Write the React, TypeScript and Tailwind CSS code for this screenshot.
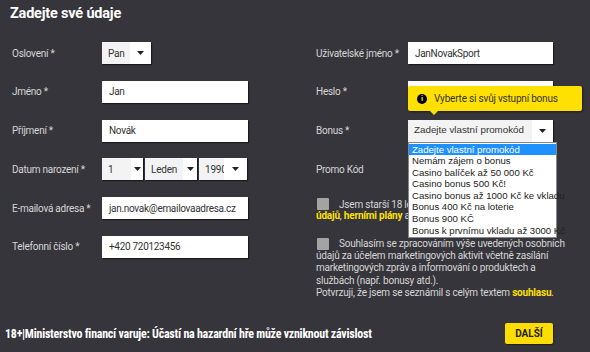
import React from "react";

const bonusOptions = [
  "Zadejte vlastní promokód",
  "Nemám zájem o bonus",
  "Casino balíček až 50 000 Kč",
  "Casino bonus 500 Kč!",
  "Casino bonus až 1000 Kč ke vkladu",
  "Bonus 400 Kč na loterie",
  "Bonus 900 KČ",
  "Bonus k prvnímu vkladu až 3000 Kč",
];

function Caret() {
  return (
    <svg width="7" height="4" viewBox="0 0 7 4" className="shrink-0">
      <path d="M0 0h7L3.5 4z" fill="#222" />
    </svg>
  );
}

function Field({ value, w = "w-[146px]" }: { value: string; w?: string }) {
  return (
    <div
      className={`${w} h-[22px] bg-white flex items-center pl-[7px] text-[10px] tracking-[-0.3px] text-[#333] whitespace-nowrap overflow-hidden shadow-[1px_1px_1px_rgba(0,0,0,0.5)]`}
    >
      {value}
    </div>
  );
}

function Select({
  value,
  w,
  textW,
  bonus,
}: {
  value: string;
  w: string;
  textW: string;
  bonus?: boolean;
}) {
  return (
    <div
      className={`${w} h-[22px] bg-white flex items-center text-[#333] shadow-[1px_1px_1px_rgba(0,0,0,0.5)]`}
    >
      <div
        className={`${textW} h-full bg-[#f3f3f3] flex items-center pl-[6px] overflow-hidden whitespace-nowrap ${
          bonus ? "text-[9.8px]" : "text-[10px] tracking-[-0.2px]"
        }`}
        style={bonus ? { fontFamily: "'Liberation Sans', Arial, sans-serif" } : undefined}
      >
        {value}
      </div>
      <div className="flex-1 flex items-center justify-center">
        <Caret />
      </div>
    </div>
  );
}

function Row({
  label,
  lw = "w-[90px]",
  children,
}: {
  label: string;
  lw?: string;
  children: React.ReactNode;
}) {
  return (
    <div className="flex items-center h-[22px]">
      <div className={`${lw} shrink-0 whitespace-nowrap text-[10px] tracking-[-0.25px] text-[#d6d6d6]`}>
        {label}
      </div>
      {children}
    </div>
  );
}

function Checkbox() {
  return <div className="w-[12px] h-[12px] bg-[#a3a3a3] shrink-0 rounded-[1px]" />;
}

export default function App() {
  return (
    <div
      className="relative w-[590px] h-[352px] overflow-hidden bg-[#36353b] text-white"
      style={{ fontFamily: "Roboto, 'Liberation Sans', sans-serif" }}
    >
      <h1 className="pl-[10px] pt-[5px] text-[14.5px] font-bold leading-[18px] tracking-[-0.2px]">
        Zadejte své údaje
      </h1>

      <div className="flex mt-[19px]">
        {/* left column */}
        <div className="w-[304px] pl-[12px] flex flex-col gap-[16.8px]">
          <Row label="Oslovení *">
            <Select value="Pan" w="w-[49px]" textW="w-[28px]" />
          </Row>
          <Row label="Jméno *">
            <Field value="Jan" />
          </Row>
          <Row label="Příjmení *">
            <Field value="Novák" />
          </Row>
          <Row label="Datum narození *">
            <div className="flex gap-[2px]">
              <Select value="1" w="w-[41px]" textW="w-[29px]" />
              <Select value="Leden" w="w-[52px]" textW="w-[38px]" />
              <Select value="1990" w="w-[48px]" textW="w-[25px]" />
            </div>
          </Row>
          <Row label="E-mailová adresa *">
            <Field value="jan.novak@emailovaadresa.cz" />
          </Row>
          <Row label="Telefonní číslo *">
            <Field value="+420  720123456" />
          </Row>
        </div>

        {/* right column */}
        <div className="flex-1 pl-[12px]">
          <div className="flex flex-col gap-[16.8px]">
            <Row label="Uživatelské jméno *" lw="w-[92px]">
              <Field value="JanNovakSport" w="w-[145px]" />
            </Row>
            <Row label="Heslo *" lw="w-[92px]">
              <Field value="" w="w-[145px]" />
            </Row>
            <Row label="Bonus *" lw="w-[92px]">
              <Select value="Zadejte vlastní promokód" w="w-[145px]" textW="w-[124px]" bonus />
            </Row>
            <Row label="Promo Kód" lw="w-[92px]">
              <Field value="" w="w-[145px]" />
            </Row>
          </div>

          <div className="mt-[18px] w-[262px] text-[10px] leading-[11.5px] tracking-[-0.2px] text-[#d6d6d6] whitespace-nowrap overflow-hidden">
            <div className="flex items-center">
              <div className="pl-[1px]">
                <Checkbox />
              </div>
              <div className="ml-[10px]">Jsem starší 18 let a souhlasím s obchodními</div>
            </div>
            <div>
              <span className="text-[#ffe100] font-bold">údajů</span>,{" "}
              <span className="text-[#ffe100] font-bold">herními plány</span> a s pravidly.
            </div>
          </div>

          <div className="mt-[16px] w-[262px] text-[10px] leading-[12.3px] tracking-[-0.2px] text-[#d6d6d6] whitespace-nowrap">
            <div className="flex items-center">
              <div className="pl-[1px]">
                <Checkbox />
              </div>
              <div className="ml-[10px]">Souhlasím se zpracováním výše uvedených osobních</div>
            </div>
            údajů za účelem marketingových aktivit včetně zasílání
            <br />
            marketingových zpráv a informování o produktech a
            <br />
            službách (např. bonusy atd.).
            <br />
            Potvrzuji, že jsem se seznámil s celým textem{" "}
            <span className="text-[#ffe100] font-bold">souhlasu</span>.
          </div>
        </div>
      </div>

      {/* footer */}
      <div className="absolute left-0 right-0 bottom-[8px] flex items-end justify-between pl-[5px] pr-[37px]">
        <div
          className="text-[12px] font-bold text-white pb-[1px] tracking-[-0.25px]"
          style={{ fontFamily: "'Liberation Sans Narrow', 'Roboto Condensed', Roboto, sans-serif" }}
        >
          18+|Ministerstvo financí varuje: Účastí na hazardní hře může vzniknout závislost
        </div>
        <button className="w-[48px] h-[21px] bg-[#ffdd00] rounded-[2px] text-[10px] font-bold text-[#222] shadow-[1px_1px_1px_rgba(0,0,0,0.4)]">
          DALŠÍ
        </button>
      </div>

      {/* tooltip */}
      <div className="absolute left-[408px] top-[86px] w-[174px] h-[25px] bg-[#ffe000] rounded-[2px] shadow-[1px_1px_2px_rgba(0,0,0,0.5)] flex items-center pl-[9px] gap-[7px]">
        <div className="w-[10px] h-[10px] rounded-full bg-black flex items-center justify-center text-[#ffe000] text-[8px] font-bold leading-none">
          i
        </div>
        <span className="text-[10px] tracking-[-0.2px] text-[#333]">Vyberte si svůj vstupní bonus</span>
        <div className="absolute left-[22px] -bottom-[4px] w-0 h-0 border-l-[4px] border-r-[4px] border-t-[4px] border-l-transparent border-r-transparent border-t-[#ffe000]" />
      </div>

      {/* open dropdown */}
      <div
        className="absolute left-[408px] top-[142px] w-[149px] bg-white border border-[#888] text-[9.6px] leading-[11.6px] text-[#222] py-[0.5px]"
        style={{ fontFamily: "'Liberation Sans', Arial, sans-serif" }}
      >
        {bonusOptions.map((o, i) => (
          <div
            key={o}
            className={`pl-[3px] whitespace-nowrap ${i === 0 ? "bg-[#1e90ff] text-white" : ""}`}
          >
            {o}
          </div>
        ))}
      </div>
    </div>
  );
}
